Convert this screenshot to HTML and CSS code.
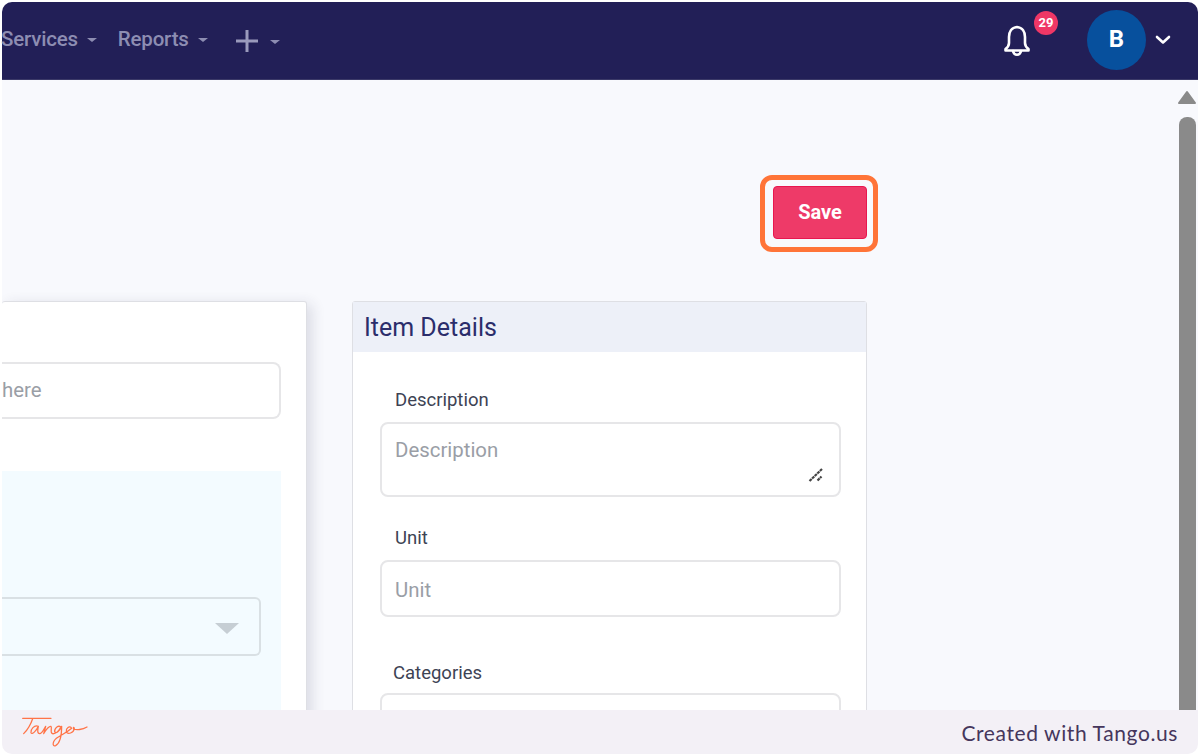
FILE: index.html
```html
<!DOCTYPE html>
<html lang="en">
<head>
<meta charset="utf-8">
<title>Item Details</title>
<link rel="stylesheet" href="styles.css">
</head>
<body>
<div class="frame">
  <header class="navbar">
    <nav class="nav-links">
      <span class="nav-item">Services<i class="caret"></i></span>
      <span class="nav-item">Reports<i class="caret"></i></span>
      <span class="nav-item nav-plus">
        <svg class="plus" width="24" height="24" viewBox="0 0 24 24"><path d="M12 1v22M1 12h22"/></svg>
        <i class="caret"></i>
      </span>
    </nav>
    <div class="nav-right">
      <div class="bell-wrap">
        <svg class="bell" width="30" height="33" viewBox="0 0 30 33"><path d="M15 3C9.500 3.500 7 8 7 13v6c0 3-1.500 4.500-3.500 6v1.500h23V25c-2-1.500-3.500-3-3.500-6v-6c0-5-2.500-9.500-8-10z"/><path d="M11 27c1 5 7 5 8 0"/></svg>
        <span class="badge">29</span>
      </div>
      <div class="avatar">B</div>
      <svg class="chevron" width="16" height="10" viewBox="0 0 16 10"><path d="M2 2l6 5.500L14 2"/></svg>
    </div>
  </header>
  <main class="main">
    <div class="content">
      <div class="actions">
        <button class="save" type="button">Save<span class="highlight"></span></button>
      </div>
      <div class="cards">
        <section class="card card-left">
          <div class="fake-input search"><span class="ph">here</span></div>
          <div class="panel">
            <div class="select"><i class="select-arrow"></i></div>
          </div>
        </section>
        <section class="card card-right">
          <h2 class="card-title">Item Details</h2>
          <div class="card-body">
            <label class="label label-first">Description</label>
            <div class="fake-input textarea"><span class="ph">Description</span>
              <svg class="grip" width="16" height="14" viewBox="0 0 16 14"><path d="M1.500 13L14 1M9.500 12.500l4-4"/></svg>
            </div>
            <label class="label label-unit">Unit</label>
            <div class="fake-input unit"><span class="ph">Unit</span></div>
            <label class="label label-cat">Categories</label>
            <div class="fake-input cat"></div>
          </div>
        </section>
      </div>
    </div>
    <aside class="scrollbar">
      <svg class="scroll-up" width="20" height="15" viewBox="0 0 20 15"><path d="M10 2L2 13h16z"/></svg>
      <div class="thumb"></div>
    </aside>
  </main>
  <footer class="footer">
    <svg class="logo" width="70" height="32" viewBox="0 0 210 96" role="img" aria-label="Tango"><path d="M5 4h85M35 5C28 25 18 40 8 50M52 28C40 22 28 38 30 47 33 54 46 42 52 28 50 38 48 50 56 50 64 50 68 36 74 28 72 36 70 44 68 50 74 40 82 26 90 28 94 32 86 46 94 50 104 52 114 40 120 30 108 22 98 40 102 46 106 50 116 42 122 28 122 50 118 78 104 86 92 90 94 70 112 60 126 52 138 46 152 34 146 24 134 34 136 44 140 54 158 48 160 34 158 28 156 32 158 36 166 40 184 38 198 30"/></svg>
    <span class="credit">Created with Tango.us</span>
  </footer>
</div>
</body>
</html>
```
FILE: styles.css
```css
* { box-sizing: border-box; }
html, body { margin: 0; height: 100%; }
body { background: #fff; overflow: hidden; font-family: Roboto, "Liberation Sans", sans-serif; }

.frame {
  width: 1200px; height: 756px; padding: 2px;
  display: flex; flex-direction: column;
}

.navbar {
  height: 78px; flex: none;
  background: #221f57;
  border-radius: 10px 10px 0 0;
  border-bottom: 1px solid #3b3968;
  display: flex; align-items: center; justify-content: space-between;
}
.nav-links { display: flex; align-items: center; gap: 21px; margin-left: -1px; }
.nav-item {
  display: flex; align-items: center; gap: 9px;
  color: #8d8db2; font-size: 20.500px; font-weight: 500; letter-spacing: -0.2px;
  padding-bottom: 3px;
}
.nav-plus { gap: 11px; margin-left: 6px; padding-bottom: 0; }
.caret {
  width: 0; height: 0; margin-top: 2px;
  border-left: 5px solid transparent; border-right: 5px solid transparent;
  border-top: 4px solid #8d8db2;
}
.plus path { stroke: #9a9abc; stroke-width: 3; fill: none; }

.nav-right { display: flex; align-items: center; padding: 0 27px 1px 0; }
.bell-wrap { position: relative; width: 30px; height: 33px; margin-right: 55px; }
.bell path { fill: none; stroke: #fff; stroke-width: 2.600; stroke-linejoin: round; stroke-linecap: round; }
.badge {
  position: absolute; left: 32px; top: -13px;
  width: 24px; height: 24px; border-radius: 50%;
  background: #ef3766; color: #fff;
  font-size: 13px; font-weight: 700; line-height: 24px; text-align: center;
}
.avatar {
  width: 59px; height: 60px; border-radius: 50%;
  background: #07509d; color: #fff;
  font-size: 24px; font-weight: 700; line-height: 58px; text-align: center;
}
.chevron { margin-left: 9px; }
.chevron path { fill: none; stroke: #fff; stroke-width: 2.600; stroke-linecap: round; stroke-linejoin: round; }

.main { flex: 1; min-height: 0; display: flex; background: #f8f9fd; overflow: hidden; }
.content { flex: 1; min-width: 0; padding-right: 311px; }

.actions { height: 221px; padding-top: 106px; display: flex; justify-content: flex-end; }
.save {
  position: relative;
  width: 94px; height: 53px;
  background: #ee3a68; border: 1px solid #e8164f; border-radius: 4px;
  color: #fff; font: 700 20px Roboto, "Liberation Sans", sans-serif;
  padding: 0 0 2px;
}
.highlight {
  position: absolute; left: -14px; top: -12px;
  width: 118px; height: 77px;
  border: 5px solid #ff7438; border-radius: 12px;
}

.cards { display: flex; gap: 45px; align-items: flex-start; }
.card { background: #fff; border: 1px solid #dedfe4; height: 480px; border-radius: 3px 3px 0 0; }
.card-left {
  flex: 1; min-width: 0;
  border-left: 0;
  padding: 60px 25px 0 0;
  box-shadow: 5px 3px 14px rgba(40, 40, 80, .14);
}
.card-right { width: 515px; flex: none; }

.fake-input {
  position: relative; background: #fff;
  border: 2px solid #e6e6e8; border-radius: 8px;
  font-size: 20.400px; color: #9a9ea6; padding: 0 13px;
}
.search { height: 57px; border-left: 0; border-radius: 0 8px 8px 0; padding: 0; line-height: 52px; }
.ph { display: block; }
.panel { margin-top: 52px; height: 300px; background: #f3fbff; padding: 126px 20px 0 0; }
.select {
  position: relative; height: 59px;
  background: #f3fbff; border: 2px solid #d9e0e4; border-left: 0; border-radius: 0 6px 6px 0;
}
.select-arrow {
  position: absolute; right: 20px; top: 24px;
  width: 0; height: 0;
  border-left: 12px solid transparent; border-right: 12px solid transparent;
  border-top: 11px solid #c6ced4;
}

.card-title {
  margin: 0; height: 50px; padding-left: 11px;
  background: #edf0f8; color: #2b2d6b;
  font-size: 25px; font-weight: 400; line-height: 51px;
}
.card-body { padding: 0 25px 0 27px; }
.label { display: block; color: #3d4354; font-size: 18.500px; line-height: 24px; padding-left: 15px; }
.label-first { padding-top: 36px; height: 70px; }
.label-unit { padding-top: 29px; height: 63px; }
.label-cat { margin-top: 44px; height: 32px; padding-left: 13px; }
.textarea { height: 75px; padding-top: 14px; line-height: 24px; }
.unit { height: 57px; line-height: 57px; }
.cat { height: 60px; }
.grip { position: absolute; right: 15px; bottom: 13px; }
.grip path { fill: none; stroke: #444; stroke-width: 2.200; stroke-dasharray: 3 .6; }

.scrollbar { width: 18px; margin-right: 2px; flex: none; padding-top: 10px; display: flex; flex-direction: column; align-items: center; gap: 12px; }
.scroll-up { flex: none; }
.scroll-up path { fill: #8a8a8a; stroke: #8a8a8a; stroke-width: 2; stroke-linejoin: round; }
.thumb { width: 17px; flex: 1; background: #8a8a8a; border-radius: 8px 8px 0 0; }

.footer {
  height: 44px; flex: none;
  background: #f3f0f6; border-radius: 0 0 10px 10px;
  display: flex; align-items: center; justify-content: space-between;
  padding: 0 20px 0 19px;
}
.logo { margin-top: 2px; }
.logo path { fill: none; stroke: #ff7448; stroke-width: 3.800; stroke-linecap: round; stroke-linejoin: round; }
.credit { color: #45365c; font: 21px Lato, "Open Sans", sans-serif; letter-spacing: .6px; }
```
